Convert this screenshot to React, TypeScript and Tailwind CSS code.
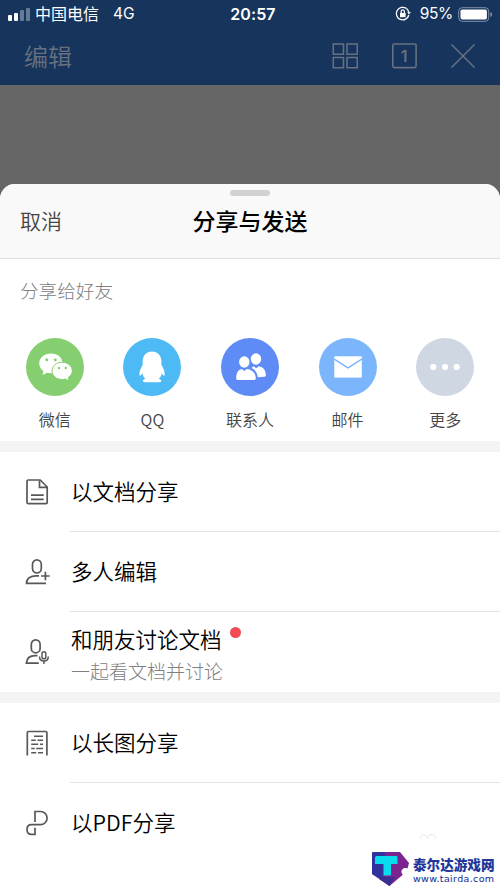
import type { ReactNode } from "react";
import clsx from "clsx";

function WeChatIcon() {
  return (
    <svg width="58" height="58" viewBox="0 0 58 58" fill="none">
      <path
        d="M25 15.500c-6.500 0-11.800 4.200-11.800 9.800 0 3.200 1.600 5.900 4.200 7.700L16.600 37l4.600-2.200c1.200.3 2.500.4 3.800.4 6.500 0 11.600-4.300 11.600-9.900S31.500 15.500 25 15.500z"
        fill="#fff"
      />
      <path
        d="M36.200 24.200c-5.900 0-10.200 3.900-10.200 8.700s4.300 8.600 10.200 8.600c1.100 0 2.200-.1 3.200-.4l3.700 1.900-.8-3.500c2.300-1.500 4-3.900 4-6.600 0-4.800-4.400-8.700-10.100-8.700z"
        fill="#fff"
        stroke="#86cf70"
        strokeWidth="1"
      />
      <g fill="#86cf70">
        <circle cx="20.800" cy="21.800" r="1.500" />
        <circle cx="29.300" cy="21.800" r="1.500" />
        <circle cx="33" cy="30" r="1.200" />
        <circle cx="39.800" cy="30" r="1.200" />
      </g>
    </svg>
  );
}

function QQIcon() {
  return (
    <svg width="58" height="58" viewBox="0 0 58 58" fill="#fff">
      <path d="M29 13.500c-5.400 0-9.300 4-9.300 9.400v4c-1.700 2.700-3.300 6-3.300 9 0 1.700.7 2.200 1.500 1.400l1.500-1.800c.4 2.300 1.400 3.900 3 5.300-1.500.5-2.500 1.300-2.500 2.300 0 .8.6 1.200 2 1.200h14.400c1.300 0 2-.4 2-1.200 0-1-1-1.800-2.600-2.300 1.600-1.400 2.600-3 3-5.300l1.500 1.800c.8.8 1.500.3 1.500-1.400 0-3-1.600-6.300-3.300-9v-4c0-5.400-4-9.400-9.400-9.400z" />
    </svg>
  );
}

function ContactsIcon() {
  return (
    <svg width="58" height="58" viewBox="0 0 58 58" fill="#fff">
      <ellipse cx="35" cy="21" rx="5.200" ry="5.700" />
      <path d="M30.500 30l2-1.800 2.700 2 2.600-2c4.400.8 7 3.900 7 8.800 0 1-.4 1.500-1.200 1.700l-6.800.5c-.6-4.400-2.700-7.600-6.300-9.200z" />
      <ellipse cx="23.300" cy="24" rx="5.200" ry="5.700" />
      <path d="m20.800 31 2.500 2 2.500-2c5.600.6 9 4.200 9 9.600 0 .9-.5 1.400-1.400 1.400H16.600c-.9 0-1.400-.5-1.400-1.400 0-5.300 1.600-8.800 5.600-9.600z" />
    </svg>
  );
}

function MailIcon() {
  return (
    <svg width="58" height="58" viewBox="0 0 58 58" fill="none">
      <path d="M15.300 18.300h27.500v21.300H15.300z" fill="#fff" />
      <path d="M15.300 21.100 29 29.800l13.800-8.700" stroke="#7bb5fb" strokeWidth="1.400" />
    </svg>
  );
}

function MoreIcon() {
  return (
    <svg width="58" height="58" viewBox="0 0 58 58" fill="#fff">
      <circle cx="17.300" cy="29" r="3.100" />
      <circle cx="29" cy="29" r="3.100" />
      <circle cx="40.700" cy="29" r="3.100" />
    </svg>
  );
}

const lineProps = {
  width: 30,
  height: 30,
  viewBox: "0 0 30 30",
  fill: "none",
  stroke: "#585858",
  strokeWidth: 1.7,
};

function DocIcon() {
  return (
    <svg {...lineProps}>
      <path d="M6.200 3h12l7 7v15.500a1.200 1.200 0 0 1-1.200 1.200H6.200A1.200 1.200 0 0 1 5 25.500V4.200A1.200 1.200 0 0 1 6.200 3z" />
      <path d="M17.500 3.400v7h7.500M9 18.200h12.700M9 22.300h12.700" />
    </svg>
  );
}

function PersonAddIcon() {
  return (
    <svg {...lineProps}>
      <rect x="10.500" y="2.800" width="8.800" height="13.200" rx="4.400" />
      <path d="M17 18.800h-3C8.500 18.800 4.500 21.500 4.500 26.300h19.500M23.400 14.700v8.600M19.100 19h8.600" />
    </svg>
  );
}

function PersonMicIcon() {
  return (
    <svg {...lineProps}>
      <rect x="9.300" y="2.800" width="8.800" height="13" rx="4.400" />
      <path d="M15.500 18.600h-2.400c-4.800 0-8.400 2.700-8.800 7.600h12.500" />
      <rect x="20" y="14.800" width="3.800" height="7" rx="1.900" strokeWidth="1.500" />
      <path d="M17.500 19.500c0 3 1.600 4.500 4.400 4.500s4.400-1.500 4.400-4.500M21.900 24v3" strokeWidth="1.500" />
    </svg>
  );
}

function LongImageIcon() {
  return (
    <svg {...lineProps}>
      <path d="M5.300 27.500V4.700a1.200 1.200 0 0 1 1.200-1.200h17.200a1.200 1.200 0 0 1 1.200 1.200v22.800" />
      <path
        d="M12 8.200h9M9.200 12.200h4.600M15.500 12.200H21M9.200 16.200h7M18 16.200h3M9.200 20.500h3.500M14.200 20.500H21M9.200 24.700h5M16 24.700h5"
        strokeWidth="1.500"
      />
    </svg>
  );
}

function PdfIcon() {
  return (
    <svg {...lineProps}>
      <path d="M13 14V3.500h5.500a6.600 6.600 0 0 1 0 13.200H9.500c-3 0-4.500 1.800-4.500 4.700s1.500 4.900 4.500 4.900H13v-6.500" />
    </svg>
  );
}

const friends: { label: string; color: string; icon: ReactNode }[] = [
  { label: "微信", color: "bg-[#86cf70]", icon: <WeChatIcon /> },
  { label: "QQ", color: "bg-[#4dbaf6]", icon: <QQIcon /> },
  { label: "联系人", color: "bg-[#5f8bf6]", icon: <ContactsIcon /> },
  { label: "邮件", color: "bg-[#7bb5fb]", icon: <MailIcon /> },
  { label: "更多", color: "bg-[#cfd8e2]", icon: <MoreIcon /> },
];

function StatusBar() {
  return (
    <div className="grid h-7 grid-cols-3 items-center pl-2 pr-[7px] text-white">
      <div className="flex items-center">
        <div className="mr-[5px] flex items-end gap-[2px] pt-px">
          <span className="h-[6px] w-1 rounded-[1px] bg-white" />
          <span className="h-2 w-1 rounded-[1px] bg-white" />
          <span className="h-[11px] w-1 rounded-[1px] bg-white/35" />
          <span className="h-[13px] w-1 rounded-[1px] bg-white/35" />
        </div>
        <span className="-mt-[2px] text-[16px] leading-7">中国电信</span>
        <span className="ml-[14px] font-[Inter] text-[15.500px]">4G</span>
      </div>
      <div className="pl-[5px] text-center font-[Inter] text-[16px] font-semibold tracking-[0.1px]">
        20:57
      </div>
      <div className="flex items-center justify-end">
        <svg width="17" height="16" viewBox="0 0 17 16" fill="none" stroke="#fff" strokeWidth="1.300">
          <path d="M11.500 2.600A6.300 6.300 0 1 0 13.800 9" />
          <path d="M11.500 2.600a6.300 6.300 0 0 1 2.300 4" />
          <path d="m12.200 6.200 1.800 2.300 2-2.300z" fill="#fff" stroke="none" />
          <rect x="5" y="7" width="5.600" height="4.200" fill="#fff" stroke="none" />
          <path d="M6.200 7V5.500a1.600 1.600 0 0 1 3.200 0V7" />
        </svg>
        <span className="ml-[8px] mr-[5px] font-[Inter] text-[15.500px] tracking-[-0.300px]">95%</span>
        <svg width="35" height="15" viewBox="0 0 35 15">
          <rect x=".7" y=".7" width="30" height="13.600" rx="3.500" fill="none" stroke="#8292a8" />
          <rect x="2.500" y="2.500" width="26.400" height="10" rx="1.800" fill="#fff" />
          <path d="M32.300 5c1.200.4 1.800 1.300 1.800 2.500s-.6 2.100-1.800 2.500z" fill="#8292a8" />
        </svg>
      </div>
    </div>
  );
}

function Toolbar() {
  return (
    <div className="flex h-[56px] items-center justify-between pl-6 pr-[24px] text-[#677180]">
      <span className="text-[24px] font-[350] leading-none">编辑</span>
      <div className="flex items-center gap-[33px]">
        <svg width="27" height="26" viewBox="0 0 27 26" fill="none" stroke="currentColor" strokeWidth="1.500">
          <path d="M1.300 1h10.200v10.200H1.300zM15 1h10.200v10.200H15zM1.300 14.500h10.200v10.200H1.300zM15 14.500h10.200v10.200H15z" />
        </svg>
        <svg width="25" height="26" viewBox="0 0 25 26" fill="none" stroke="currentColor" strokeWidth="1.600">
          <rect x=".8" y="1" width="23.300" height="23.600" rx="1.500" />
          <text
            x="12.200"
            y="18.500"
            textAnchor="middle"
            fill="currentColor"
            stroke="none"
            className="font-[Inter] text-[16px] font-semibold"
          >
            1
          </text>
        </svg>
        <svg width="26" height="26" viewBox="0 0 26 26" fill="none" stroke="currentColor" strokeWidth="1.500">
          <path d="m1.500 1.500 23 23M24.500 1.500l-23 23" />
        </svg>
      </div>
    </div>
  );
}

type RowProps = {
  icon: ReactNode;
  title: string;
  subtitle?: string;
  divider?: boolean;
  dot?: boolean;
};

function Row({ icon, title, subtitle, divider, dot }: RowProps) {
  return (
    <div className="flex h-20 items-center pl-[22px]">
      <div className="mr-[18px] shrink-0">{icon}</div>
      <div
        className={clsx(
          "flex h-full flex-1 flex-col justify-center border-b pl-px",
          divider ? "border-[#e2e2e2]" : "border-transparent",
          subtitle ? "pt-[6px]" : "pb-[2px]"
        )}
      >
        <div className="flex">
          <span className="text-[21.500px] font-[350] leading-8 text-black">{title}</span>
          {dot && <span className="ml-[8px] mt-[4px] size-[11px] rounded-full bg-[#f34b55]" />}
        </div>
        {subtitle && (
          <span className="text-[19px] font-light leading-[31px] text-[#808080]">{subtitle}</span>
        )}
      </div>
    </div>
  );
}

function SiteLogo() {
  return (
    <div className="absolute bottom-[2px] right-[5px] flex items-center gap-[2px]">
      <svg width="40" height="36" viewBox="0 0 40 36">
        <path d="M2 1h27l9 11-1.500 5.500c-3-1.500-6.500.5-6 4 .2 1 .8 1.800 1.300 2.300L18.500 35 1 23V2z" fill="#7b2490" />
        <path d="M2 1h12l-2 28L1 23V2z" fill="#30339b" />
        <path d="M12 26h12l-5.500 9L8 28z" fill="#3b2d91" />
        <path d="M6 5h19c1 0 1.500.5 1.500 1.500V13h-6.500v10c0 1-.5 1.500-1.500 1.500h-6V13H4V7c0-1.200.8-2 2-2z" fill="#09dcec" />
      </svg>
      <div className="flex w-[82px] flex-col text-[#23379a]">
        <span className="whitespace-nowrap text-[13.600px] font-black leading-[18px]">泰尔达游戏网</span>
        <span className="font-['DejaVu_Sans'] text-[9.500px] leading-[11px] tracking-[0.35px] [-webkit-text-stroke:0.1px_#23379a]">
          www.tairda.com
        </span>
      </div>
    </div>
  );
}

export default function App() {
  return (
    <div className="relative flex h-[889px] w-[500px] flex-col overflow-hidden bg-[#666] font-['Noto_Sans_CJK_SC',sans-serif]">
      <header className="mb-[99px] h-[85px] shrink-0 bg-[#16345c]">
        <StatusBar />
        <Toolbar />
      </header>

      <main className="flex flex-1 flex-col overflow-hidden rounded-t-[15px] bg-white">
        <div className="flex h-[75px] shrink-0 flex-col border-b border-[#dedede] bg-[#f9f9f9] pt-[6px]">
          <div className="mx-auto h-[6px] w-10 rounded-full bg-[#d1d1d1]" />
          <div className="mt-[7px] grid grid-cols-3 items-center px-[20px] leading-[34px]">
            <button className="text-left text-[21px] font-[350] text-[#444]">取消</button>
            <h1 className="whitespace-nowrap text-center text-[23px] font-medium text-black">
              分享与发送
            </h1>
          </div>
        </div>

        <section className="h-[182px] shrink-0 pt-[17px]">
          <h2 className="pl-5 text-[18.600px] font-light leading-[28px] text-[#808080]">分享给好友</h2>
          <div className="mt-[34px] flex px-[6px]">
            {friends.map((f) => (
              <div key={f.label} className="flex flex-1 flex-col items-center">
                <div className={clsx("size-[58px] rounded-full", f.color)}>{f.icon}</div>
                <span className="mt-[11px] text-[16px] font-[350] leading-6 text-[#444]">
                  {f.label}
                </span>
              </div>
            ))}
          </div>
        </section>

        <section className="border-t-[11px] border-[#f4f4f4]">
          <Row icon={<DocIcon />} title="以文档分享" divider />
          <Row icon={<PersonAddIcon />} title="多人编辑" divider />
          <Row icon={<PersonMicIcon />} title="和朋友讨论文档" subtitle="一起看文档并讨论" dot />
        </section>
        <section className="border-t-[11px] border-[#f4f4f4]">
          <Row icon={<LongImageIcon />} title="以长图分享" divider />
          <Row icon={<PdfIcon />} title="以PDF分享" />
        </section>
      </main>

      <svg className="absolute left-[419px] top-[832px]" width="20" height="10" viewBox="0 0 20 10" fill="none" stroke="#e7e7e7">
        <path d="M1 7c1-5 6-6 8 0M9 5c2-4 7-3 8 2" />
      </svg>
      <SiteLogo />
    </div>
  );
}
